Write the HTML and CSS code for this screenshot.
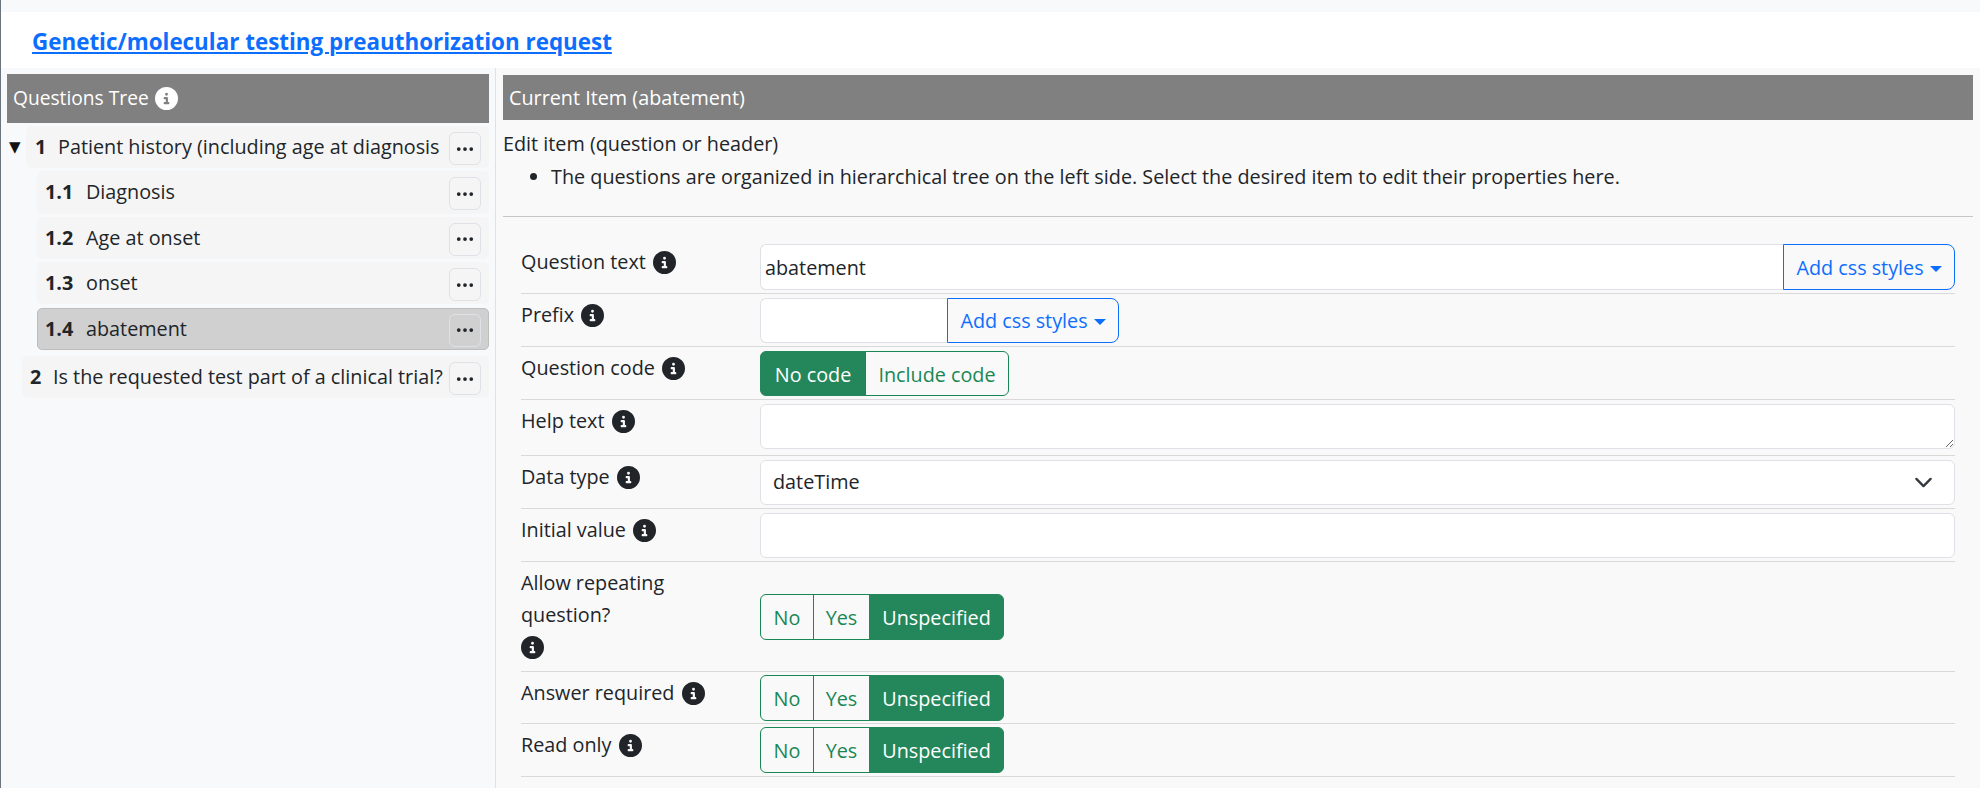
FILE: index.html
```html
<!DOCTYPE html>
<html lang="en">
<head>
  <meta charset="UTF-8">
  <title>Genetic/molecular testing preauthorization request</title>
  <link rel="stylesheet" href="styles.css">
</head>
<body>
  <svg class="icon-defs" width="0" height="0">
    <symbol id="info" viewBox="0 0 512 512">
      <path d="M256 512A256 256 0 1 0 256 0a256 256 0 1 0 0 512zM216 336h24V272H216c-13.3 0-24-10.7-24-24s10.7-24 24-24h48c13.3 0 24 10.7 24 24v88h8c13.3 0 24 10.7 24 24s-10.7 24-24 24H216c-13.3 0-24-10.7-24-24s10.7-24 24-24zm40-208a32 32 0 1 1 0 64 32 32 0 1 1 0-64z"/>
    </symbol>
    <symbol id="dots" viewBox="0 0 16 16">
      <path d="M3 9.5a1.5 1.5 0 1 1 0-3 1.5 1.5 0 0 1 0 3zm5 0a1.5 1.5 0 1 1 0-3 1.5 1.5 0 0 1 0 3zm5 0a1.5 1.5 0 1 1 0-3 1.5 1.5 0 0 1 0 3z"/>
    </symbol>
  </svg>

  <header class="page-title">
    <a href="#">Genetic/molecular testing preauthorization request</a>
  </header>

  <main class="editor">
    <!-- Arvore de perguntas -->
    <section class="tree-panel">
      <h2 class="bar bar-tree">Questions Tree <svg class="info info-light"><use href="#info"/></svg></h2>

      <div class="tree">
        <div class="tree-parent">
          <span class="toggle">▼</span>
          <div class="node node-first">
            <b class="num">1</b><span class="node-text">Patient history (including age at diagnosis</span>
            <button class="dots" type="button"><svg><use href="#dots"/></svg></button>
          </div>
        </div>
        <div class="node node-child">
          <b class="num">1.1</b><span class="node-text">Diagnosis</span>
          <button class="dots" type="button"><svg><use href="#dots"/></svg></button>
        </div>
        <div class="node node-child">
          <b class="num">1.2</b><span class="node-text">Age at onset</span>
          <button class="dots" type="button"><svg><use href="#dots"/></svg></button>
        </div>
        <div class="node node-child">
          <b class="num">1.3</b><span class="node-text">onset</span>
          <button class="dots" type="button"><svg><use href="#dots"/></svg></button>
        </div>
        <div class="node node-child node-active">
          <b class="num">1.4</b><span class="node-text">abatement</span>
          <button class="dots" type="button"><svg><use href="#dots"/></svg></button>
        </div>
        <div class="node node-root">
          <b class="num">2</b><span class="node-text">Is the requested test part of a clinical trial?</span>
          <button class="dots" type="button"><svg><use href="#dots"/></svg></button>
        </div>
      </div>
    </section>

    <!-- Item atual -->
    <section class="item-panel">
      <h2 class="bar">Current Item (abatement)</h2>
      <p class="intro">Edit item (question or header)</p>
      <ul class="hints">
        <li>The questions are organized in hierarchical tree on the left side. Select the desired item to edit their properties here.</li>
      </ul>
      <hr class="divider">

      <form class="item-form">
        <div class="row row-first">
          <label class="row-label">Question text <svg class="info"><use href="#info"/></svg></label>
          <div class="input-group">
            <input class="control grow" type="text" value="abatement">
            <button class="btn-css" type="button">Add css styles<i class="caret"></i></button>
          </div>
        </div>

        <div class="row">
          <label class="row-label">Prefix <svg class="info"><use href="#info"/></svg></label>
          <div class="input-group">
            <input class="control prefix" type="text">
            <button class="btn-css" type="button">Add css styles<i class="caret"></i></button>
          </div>
        </div>

        <div class="row">
          <label class="row-label">Question code <svg class="info"><use href="#info"/></svg></label>
          <div class="btn-group">
            <button class="seg seg-on w-105" type="button">No code</button>
            <button class="seg w-145" type="button">Include code</button>
          </div>
        </div>

        <div class="row row-help">
          <label class="row-label">Help text <svg class="info"><use href="#info"/></svg></label>
          <textarea class="control grow"></textarea>
        </div>

        <div class="row">
          <label class="row-label">Data type <svg class="info"><use href="#info"/></svg></label>
          <div class="control grow select">
            <span>dateTime</span>
            <svg class="chevron" viewBox="0 0 16 16"><path d="m2 5 6 6 6-6"/></svg>
          </div>
        </div>

        <div class="row">
          <label class="row-label">Initial value <svg class="info"><use href="#info"/></svg></label>
          <input class="control grow" type="text">
        </div>

        <div class="row row-tall">
          <label class="row-label">Allow repeating<br>question?<br><svg class="info info-alone"><use href="#info"/></svg></label>
          <div class="btn-group">
            <button class="seg w-54" type="button">No</button>
            <button class="seg w-55" type="button">Yes</button>
            <button class="seg seg-on w-135" type="button">Unspecified</button>
          </div>
        </div>

        <div class="row row-slim">
          <label class="row-label">Answer required <svg class="info"><use href="#info"/></svg></label>
          <div class="btn-group">
            <button class="seg w-54" type="button">No</button>
            <button class="seg w-55" type="button">Yes</button>
            <button class="seg seg-on w-135" type="button">Unspecified</button>
          </div>
        </div>

        <div class="row row-slim">
          <label class="row-label">Read only <svg class="info"><use href="#info"/></svg></label>
          <div class="btn-group">
            <button class="seg w-54" type="button">No</button>
            <button class="seg w-55" type="button">Yes</button>
            <button class="seg seg-on w-135" type="button">Unspecified</button>
          </div>
        </div>
      </form>
    </section>
  </main>
</body>
</html>
```

FILE: styles.css
```css
/* Estilos gerais */
* {
  box-sizing: border-box;
}

html, body {
  height: 100%;
}

body {
  margin: 0;
  padding-top: 12px;
  display: flex;
  flex-direction: column;
  overflow: hidden;
  background-color: #f8f9fa;
  border-left: 1px solid #6c757d;
  font-family: "Open Sans", "Noto Sans", sans-serif;
  font-size: 19.8px;
  line-height: 32px;
  color: #212529;
}

input, textarea, button {
  font: inherit;
  color: inherit;
}

.icon-defs {
  position: absolute;
}

/* Titulo */
.page-title {
  height: 56px;
  flex: none;
  padding: 14px 0 0 31px;
  background-color: white;
}

.page-title a {
  font-size: 22.4px;
  font-weight: 700;
  color: #0d6efd;
}

/* Paineis */
.editor {
  flex: 1;
  display: flex;
  min-height: 0;
}

.tree-panel {
  width: 495px;
  flex: none;
  padding: 6px 6px 0 6px;
  border-right: 1px solid #dee2e6;
}

.item-panel {
  flex: 1;
  padding: 7px 7px 0 7px;
  background-color: #f9f9f9;
}

.bar {
  margin: 0;
  height: 45px;
  padding: 7px 6px 0;
  background-color: gray;
  color: white;
  font-size: 19.8px;
  font-weight: 400;
  line-height: 32px;
}

.bar-tree {
  height: 49px;
  padding-top: 8px;
  font-size: 19.2px;
}

.info {
  width: 23px;
  height: 23px;
  margin-left: 2px;
  vertical-align: -5px;
  fill: #212529;
}

.info-light {
  margin-left: 1px;
  fill: white;
}

.info-alone {
  margin-left: 0;
}

/* Arvore */
.tree {
  display: flex;
  flex-direction: column;
  gap: 3.2px;
  padding-top: 3px;
}

.tree-parent {
  display: flex;
  align-items: stretch;
}

.toggle {
  width: 19px;
  padding-left: 2px;
  flex: none;
  font-family: "DejaVu Sans", sans-serif;
  font-size: 15px;
  line-height: 42px;
  color: #111;
}

.node {
  height: 42.2px;
  display: flex;
  align-items: center;
  padding: 0 7px;
  background-color: #f5f5f5;
  border-radius: 5px;
  border: 1px solid transparent;
  white-space: nowrap;
}

.node-first {
  flex: 1;
  min-width: 0;
  padding-left: 8px;
}

.node-child {
  margin-left: 30px;
}

.node-root {
  margin-left: 15px;
  margin-top: 3.4px;
}

.node-active {
  background-color: #d0d0d0;
  border-color: #bdbdbd;
}

.num {
  width: 23px;
  flex: none;
}

.node-child .num {
  width: 41px;
}

.node-text {
  flex: 1;
  min-width: 0;
  overflow: hidden;
}

.dots {
  width: 32px;
  height: 33px;
  flex: none;
  margin-top: 3px;
  padding: 0;
  display: flex;
  align-items: center;
  justify-content: center;
  background: transparent;
  border: 1px solid #dee2e6;
  border-radius: 6px;
}

.dots svg {
  width: 20px;
  height: 20px;
  fill: #212529;
}

/* Formulario */
.intro {
  margin: 8px 0 0;
}

.hints {
  margin: 1px 0 0;
  padding-left: 48px;
}

.divider {
  margin: 23px 0 0;
  border: 0;
  border-top: 1px solid #c6c6c6;
}

.item-form {
  margin: 24px 18px 0 18px;
}

.row {
  display: flex;
  padding: 3.3px 0 3.1px;
  border-bottom: 1px solid #d9d9d9;
}

.row-first {
  padding-bottom: 3.6px;
}

.row-help {
  padding-bottom: 6px;
}

.row-tall {
  align-items: center;
  padding: 4px 0 7.4px;
}

.row-tall .row-label {
  padding-top: 1px;
}

.row-tall .btn-group {
  margin-top: 4px;
}

.row-slim {
  padding-bottom: 2.6px;
}

.row-label {
  width: 239px;
  flex: none;
  padding-top: 1.5px;
}

.control {
  height: 45.6px;
  padding: 0 4px;
  background-color: white;
  border: 1px solid #dee2e6;
  border-radius: 6px;
  outline: none;
}

.grow {
  flex: 1;
  min-width: 0;
}

textarea.control {
  resize: vertical;
  display: block;
}

.select {
  display: flex;
  align-items: center;
  justify-content: space-between;
  padding: 0 21px 0 12px;
}

.chevron {
  width: 19px;
  height: 19px;
  fill: none;
  stroke: #343a40;
  stroke-width: 2;
  stroke-linecap: round;
  stroke-linejoin: round;
}

.input-group {
  flex: 1;
  display: flex;
}

.input-group .control {
  border-radius: 6px 0 0 6px;
  border-right: 0;
}

.prefix {
  width: 187px;
  flex: none;
}

.btn-css {
  width: 172px;
  height: 45.6px;
  flex: none;
  padding: 1px 0 0;
  background: transparent;
  color: #0d6efd;
  border: 1px solid #0d6efd;
  border-radius: 0 8px 8px 0;
}

.caret {
  display: inline-block;
  margin-left: 6px;
  vertical-align: 3px;
  border-top: 6px solid #0d6efd;
  border-left: 6px solid transparent;
  border-right: 6px solid transparent;
}

.btn-group {
  display: flex;
  height: 45.6px;
}

.seg {
  padding: 2px 0 0;
  background: transparent;
  color: #198754;
  border: 1px solid #198754;
  margin-left: -1px;
}

.seg:first-child {
  margin-left: 0;
  border-radius: 6px 0 0 6px;
}

.seg:last-child {
  border-radius: 0 6px 6px 0;
}

.seg-on {
  background-color: #24875b;
  border-color: #24875b;
  color: white;
}

.w-54 { width: 54px; }
.w-55 { width: 57px; }
.w-135 { width: 135px; }
.w-105 { width: 106px; }
.w-145 { width: 144px; }
```
